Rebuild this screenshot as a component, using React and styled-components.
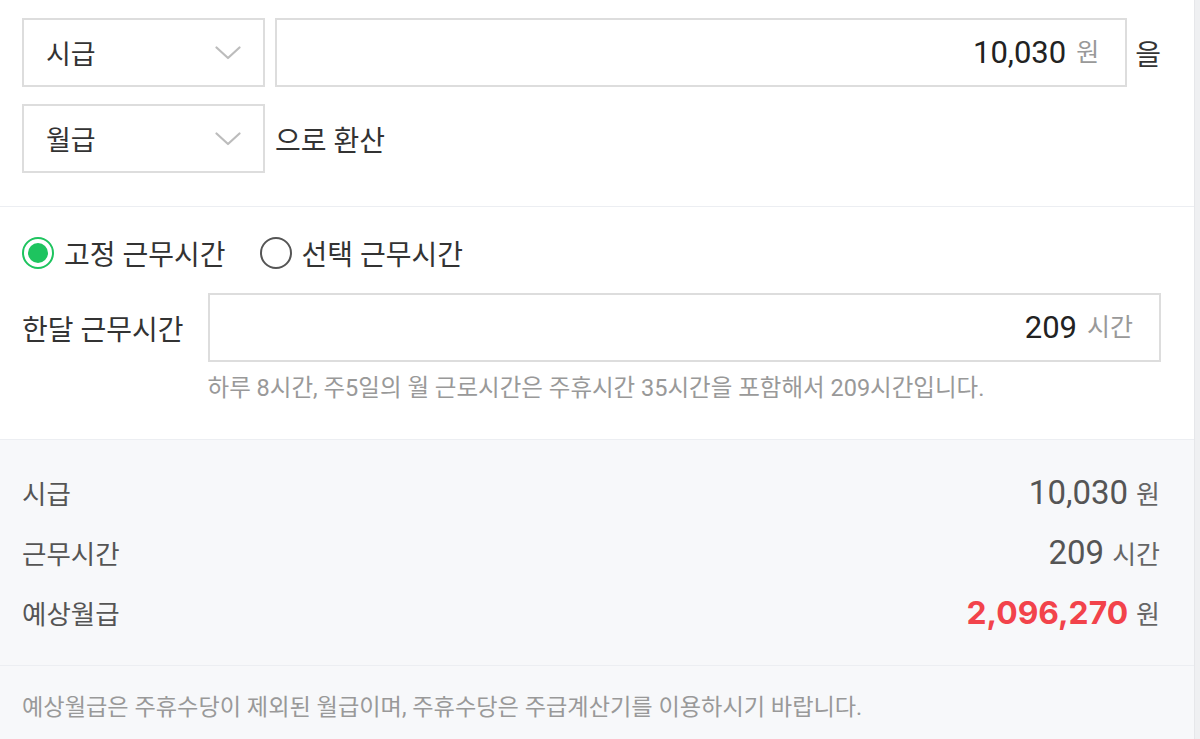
import React, { useState } from 'react';
import styled, { createGlobalStyle, css } from 'styled-components';

const colors = {
  text: '#333333',
  dark: '#222222',
  muted: '#999999',
  sub: '#555555',
  border: '#dddddd',
  line: '#eceef2',
  green: '#1ec45f',
  red: '#f2434b',
  panelGray: '#f7f8fa',
};

const Global = createGlobalStyle`
  html, body {
    margin: 0;
    padding: 0;
    background: #eff0f2;
  }
  body {
    font-family: Roboto, "Noto Sans CJK KR", sans-serif;
    color: ${colors.text};
    -webkit-font-smoothing: antialiased;
  }
`;

const Panel = styled.div`
  width: 1194px;
  min-height: 739px;
  background: #ffffff;
  border-right: 1px solid #e6e7ea;
`;

const Section = styled.section`
  padding: ${p => p.pad || '0'};
  background: ${p => (p.gray ? colors.panelGray : '#ffffff')};
  border-bottom: ${p => (p.noLine ? 'none' : `1px solid ${colors.line}`)};
`;

const Row = styled.div`
  display: flex;
  align-items: center;
  gap: 10px;
  & + & {
    margin-top: 17px;
  }
`;

const SelectBox = styled.div`
  display: flex;
  align-items: center;
  justify-content: space-between;
  box-sizing: border-box;
  width: 243px;
  height: 69px;
  padding: 0 22px 0 22px;
  border: 2px solid ${colors.border};
  font-size: 27px;
  color: ${colors.text};
  cursor: pointer;
`;

const InputBox = styled.div`
  flex: 1;
  display: flex;
  align-items: center;
  justify-content: flex-end;
  gap: 10px;
  box-sizing: border-box;
  height: 69px;
  padding: 0 26px;
  border: 2px solid ${colors.border};
`;

const Num = styled.span`
  font-size: 31px;
  color: ${colors.dark};
  line-height: 1;
`;

const Unit = styled.span`
  font-size: 25px;
  color: ${colors.muted};
  line-height: 1;
`;

const Word = styled.span`
  font-size: 28px;
  color: ${colors.text};
  ${p => p.tail && css`margin-left: -2px;`}
`;

const RadioGroup = styled.div`
  display: flex;
  align-items: center;
  gap: 34px;
  height: 32px;
`;

const RadioLabel = styled.label`
  display: flex;
  align-items: center;
  gap: 10px;
  font-size: 28px;
  color: ${colors.text};
  cursor: pointer;
`;

const RadioDot = styled.span`
  position: relative;
  box-sizing: border-box;
  width: 32px;
  height: 32px;
  border-radius: 50%;
  border: 2px solid ${p => (p.checked ? colors.green : '#555555')};
  ${p => p.checked && css`
    &::after {
      content: '';
      position: absolute;
      left: 4px;
      top: 4px;
      width: 20px;
      height: 20px;
      border-radius: 50%;
      background: ${colors.green};
    }
  `}
`;

const HoursGrid = styled.div`
  display: grid;
  grid-template-columns: auto 1fr;
  column-gap: 24px;
  align-items: center;
  margin-top: 24px;
`;

const FieldLabel = styled.span`
  font-size: 28px;
  color: ${colors.text};
`;

const Hint = styled.p`
  grid-column: 2;
  margin: 11px 0 0;
  font-size: 23.5px;
  line-height: 30px;
  color: ${colors.muted};
`;

const ResultRow = styled.div`
  display: flex;
  align-items: center;
  justify-content: space-between;
  height: 60px;
`;

const ResultLabel = styled.span`
  font-size: 26.5px;
  color: ${colors.sub};
`;

const ResultValue = styled.span`
  display: flex;
  align-items: baseline;
  gap: 8px;
`;

const ResultNum = styled.span`
  font-size: 33px;
  color: ${p => (p.highlight ? colors.red : colors.sub)};
  ${p => p.highlight && css`
    font-family: Inter, "Noto Sans CJK KR", sans-serif;
    font-weight: 700;
    font-size: 31.8px;
  `}
`;

const ResultUnit = styled.span`
  font-size: 26px;
  color: #666666;
`;

const Note = styled.p`
  margin: 0;
  font-size: 23.2px;
  line-height: 30px;
  color: ${colors.muted};
`;

const Chevron = () => (
  <svg width="26" height="14" viewBox="0 0 26 14" fill="none">
    <path d="M1.5 1.5 L13 12 L24.5 1.5" stroke="#bcbcbc" strokeWidth="2.2" strokeLinecap="round" strokeLinejoin="round" />
  </svg>
);

const Select = ({ value }) => (
  <SelectBox>
    <span>{value}</span>
    <Chevron />
  </SelectBox>
);

const results = [
  { label: '시급', value: '10,030', unit: '원' },
  { label: '근무시간', value: '209', unit: '시간' },
  { label: '예상월급', value: '2,096,270', unit: '원', highlight: true },
];

export default function App() {
  const [mode, setMode] = useState('fixed');

  return (
    <Panel>
      <Global />
      <Section pad="18px 33px 33px 22px">
        <Row>
          <Select value="시급" />
          <InputBox>
            <Num>10,030</Num>
            <Unit>원</Unit>
          </InputBox>
          <Word tail>을</Word>
        </Row>
        <Row>
          <Select value="월급" />
          <Word>으로 환산</Word>
        </Row>
      </Section>

      <Section pad="30px 33px 36px 22px">
        <RadioGroup>
          <RadioLabel onClick={() => setMode('fixed')}>
            <RadioDot checked={mode === 'fixed'} />
            고정 근무시간
          </RadioLabel>
          <RadioLabel onClick={() => setMode('select')}>
            <RadioDot checked={mode === 'select'} />
            선택 근무시간
          </RadioLabel>
        </RadioGroup>
        <HoursGrid>
          <FieldLabel>한달 근무시간</FieldLabel>
          <InputBox>
            <Num>209</Num>
            <Unit>시간</Unit>
          </InputBox>
          <Hint>하루 8시간, 주5일의 월 근로시간은 주휴시간 35시간을 포함해서 209시간입니다.</Hint>
        </HoursGrid>
      </Section>

      <Section gray pad="22px 34px 23px 22px">
        {results.map(r => (
          <ResultRow key={r.label}>
            <ResultLabel>{r.label}</ResultLabel>
            <ResultValue>
              <ResultNum highlight={r.highlight}>{r.value}</ResultNum>
              <ResultUnit>{r.unit}</ResultUnit>
            </ResultValue>
          </ResultRow>
        ))}
      </Section>

      <Section gray noLine pad="26px 34px 30px 22px">
        <Note>예상월급은 주휴수당이 제외된 월급이며, 주휴수당은 주급계산기를 이용하시기 바랍니다.</Note>
      </Section>
    </Panel>
  );
}
